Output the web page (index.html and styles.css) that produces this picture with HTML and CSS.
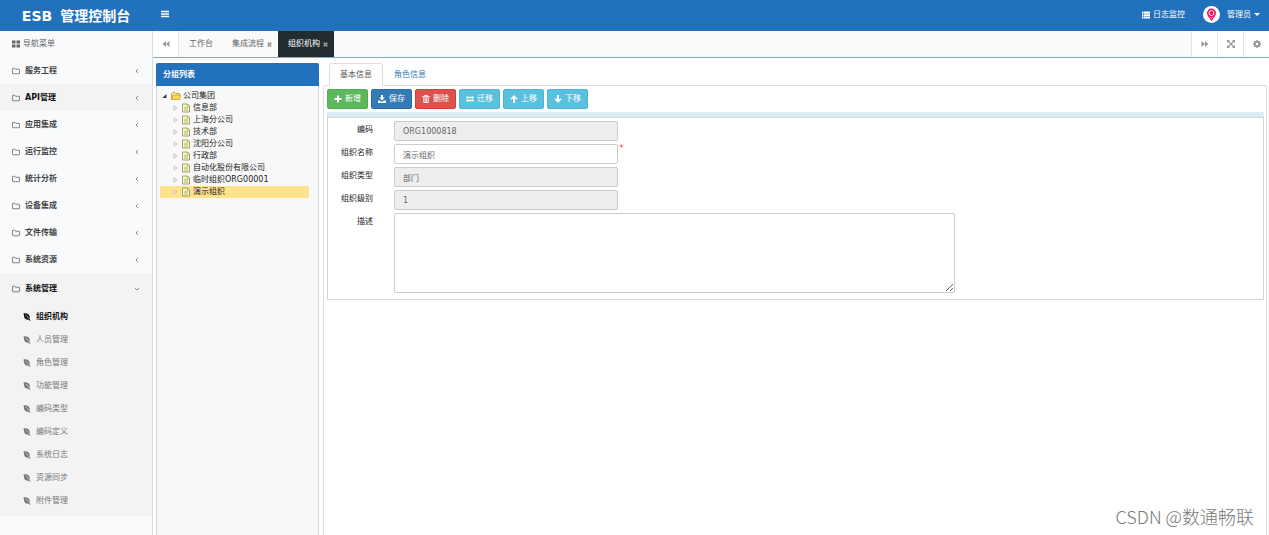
FILE: index.html
```html
<!DOCTYPE html>
<html lang="zh-CN">
<head>
<meta charset="utf-8">
<title>ESB 管理控制台</title>
<link rel="stylesheet" href="styles.css">
</head>
<body>
<svg class="sprite" aria-hidden="true">
  <symbol id="folder" viewBox="0 0 16 14"><path d="M1 2.500Q1 1.500 2 1.500H5.500L7 3.500H14Q15 3.500 15 4.500V11.500Q15 12.500 14 12.500H2Q1 12.500 1 11.500Z" fill="none" stroke="currentColor" stroke-width="1.600"/></symbol>
  <symbol id="left" viewBox="0 0 8 12"><path d="M6 2L2 6L6 10" fill="none" stroke="currentColor" stroke-width="1.700"/></symbol>
  <symbol id="down" viewBox="0 0 12 8"><path d="M2 2L6 6L10 2" fill="none" stroke="currentColor" stroke-width="1.700"/></symbol>
  <symbol id="leaf" viewBox="0 0 16 16"><path d="M1 1C7 0 12 2 13 6C14 9 13 11 13 12L15 15L14 16L11.500 13.500C6 14 2 11 2 6C2 4 1 3 1 1Z" fill="currentColor"/><path d="M5 4C8 5 10 8 11 11" fill="none" stroke="#f3f3f3" stroke-width="1.300"/></symbol>
  <symbol id="grid" viewBox="0 0 16 14"><path d="M0 0H7V6H0ZM9 0H16V6H9ZM0 8H7V14H0ZM9 8H16V14H9Z" fill="currentColor"/></symbol>
  <symbol id="bars" viewBox="0 0 14 12"><path d="M0 1.500H14M0 6H14M0 10.500H14" stroke="currentColor" stroke-width="2.600"/></symbol>
  <symbol id="list" viewBox="0 0 16 14"><path d="M0 0H3V3H0ZM4 0H16V3H4ZM0 3.600H3V6.600H0ZM4 3.600H16V6.600H4ZM0 7.200H3V10.200H0ZM4 7.200H16V10.200H4ZM0 10.800H3V13.800H0ZM4 10.800H16V13.800H4Z" fill="currentColor"/></symbol>
  <symbol id="back" viewBox="0 0 16 12"><path d="M8 0V12L1 6ZM15 0V12L8 6Z" fill="currentColor"/></symbol>
  <symbol id="forward" viewBox="0 0 16 12"><path d="M1 0V12L8 6ZM8 0V12L15 6Z" fill="currentColor"/></symbol>
  <symbol id="expand" viewBox="0 0 16 16"><path d="M0 0H6L0 6ZM10 0H16V6ZM0 10V16H6ZM16 10V16H10Z" fill="currentColor"/><path d="M2 2L14 14M14 2L2 14" stroke="currentColor" stroke-width="2.400"/></symbol>
  <symbol id="gear" viewBox="0 0 16 16"><circle cx="8" cy="8" r="4.500" fill="none" stroke="currentColor" stroke-width="4"/><path d="M8 0V3M8 13V16M0 8H3M13 8H16M2.300 2.300L4 4M12 12L13.700 13.700M13.700 2.300L12 4M4 12L2.300 13.700" stroke="currentColor" stroke-width="2.800"/></symbol>
  <symbol id="close" viewBox="0 0 12 12"><path d="M1.500 1.500L10.500 10.500M10.500 1.500L1.500 10.500" stroke="currentColor" stroke-width="3.400"/></symbol>
  <symbol id="plus" viewBox="0 0 16 16"><path d="M8 1V15M1 8H15" stroke="currentColor" stroke-width="4"/></symbol>
  <symbol id="save" viewBox="0 0 16 16"><path d="M6 0H10V5H13.500L8 11L2.500 5H6ZM0 11H4L6 13H10L12 11H16V16H0Z" fill="currentColor"/></symbol>
  <symbol id="trash" viewBox="0 0 16 16"><path d="M5 2.500V1H11V2.500M0.500 3.500H15.500" fill="none" stroke="currentColor" stroke-width="2"/><path d="M3.500 5V15H12.500V5M6.500 5V15M9.500 5V15" fill="none" stroke="currentColor" stroke-width="1.800"/></symbol>
  <symbol id="swap" viewBox="0 0 16 14"><path d="M0 2.500H12V0L16 4L12 8V5.500H0ZM16 8.500H4V6L0 10L4 14V11.500H16Z" fill="currentColor"/></symbol>
  <symbol id="up" viewBox="0 0 16 16"><path d="M8 0L15 7.500L13 9.500L10 7V16H6V7L3 9.500L1 7.500Z" fill="currentColor"/></symbol>
  <symbol id="downarrow" viewBox="0 0 16 16"><path d="M8 16L15 8.500L13 6.500L10 9V0H6V9L3 6.500L1 8.500Z" fill="currentColor"/></symbol>
  <symbol id="page" viewBox="0 0 16 18"><path d="M1 1H11L15 5V17H1Z" fill="#fafad2" stroke="#8c8e3c" stroke-width="1.600"/><path d="M10.500 1V5.500H15M4 7.500H12M4 10.500H12M4 13.500H12" fill="none" stroke="#9b9d50" stroke-width="1.200"/></symbol>
  <symbol id="treefolder" viewBox="0 0 20 16"><path d="M1 14V3L3 1H8L10 3H17V6" fill="#fff09a" stroke="#b78a1c" stroke-width="1.400"/><path d="M1 15L4 6H19L17 15Z" fill="#ffdc55" stroke="#b78a1c" stroke-width="1.400"/></symbol>
  <symbol id="closed" viewBox="0 0 10 12"><path d="M2 2L8 6L2 10Z" fill="#fff" stroke="#a6a6a6" stroke-width="1.300"/></symbol>
  <symbol id="open" viewBox="0 0 10 10"><path d="M9 1V9H1Z" fill="#333"/></symbol>
</svg>

<header class="topbar">
  <h1 class="brand"><span>ESB</span> <span>管理控制台</span></h1>
  <button class="plain toggle" aria-label="切换菜单"><svg class="icon"><use href="#bars"/></svg></button>
  <div class="account">
    <a class="log" href="#"><svg class="icon"><use href="#list"/></svg>日志监控</a>
    <button class="plain user">
      <svg class="avatar" viewBox="0 0 34 34"><circle cx="17" cy="17" r="17" fill="#fff"/><path d="M17 30C13 24 8 20 8 14A9 9 0 0 1 26 14C26 20 21 24 17 30Z" fill="#e8195f"/><circle cx="17" cy="14" r="5" fill="#e8195f" stroke="#fff" stroke-width="1.800"/><path d="M14 22L17 25L20 22" fill="none" stroke="#fff" stroke-width="1.200"/></svg>
      管理员<span class="caret"></span>
    </button>
  </div>
</header>

<div class="shell">
  <nav class="sidebar">
    <h2 class="nav-title"><svg class="icon"><use href="#grid"/></svg>导航菜单</h2>
    <button class="group"><svg class="icon"><use href="#folder"/></svg>服务工程<svg class="arrow"><use href="#left"/></svg></button>
    <button class="group hover"><svg class="icon"><use href="#folder"/></svg>API管理<svg class="arrow"><use href="#left"/></svg></button>
    <button class="group"><svg class="icon"><use href="#folder"/></svg>应用集成<svg class="arrow"><use href="#left"/></svg></button>
    <button class="group"><svg class="icon"><use href="#folder"/></svg>运行监控<svg class="arrow"><use href="#left"/></svg></button>
    <button class="group"><svg class="icon"><use href="#folder"/></svg>统计分析<svg class="arrow"><use href="#left"/></svg></button>
    <button class="group"><svg class="icon"><use href="#folder"/></svg>设备集成<svg class="arrow"><use href="#left"/></svg></button>
    <button class="group"><svg class="icon"><use href="#folder"/></svg>文件传输<svg class="arrow"><use href="#left"/></svg></button>
    <button class="group"><svg class="icon"><use href="#folder"/></svg>系统资源<svg class="arrow"><use href="#left"/></svg></button>
    <div class="expanded">
      <button class="group current"><svg class="icon"><use href="#folder"/></svg>系统管理<svg class="arrow"><use href="#down"/></svg></button>
      <a class="sub current" href="#"><svg class="icon"><use href="#leaf"/></svg>组织机构</a>
      <a class="sub" href="#"><svg class="icon"><use href="#leaf"/></svg>人员管理</a>
      <a class="sub" href="#"><svg class="icon"><use href="#leaf"/></svg>角色管理</a>
      <a class="sub" href="#"><svg class="icon"><use href="#leaf"/></svg>功能管理</a>
      <a class="sub" href="#"><svg class="icon"><use href="#leaf"/></svg>编码类型</a>
      <a class="sub" href="#"><svg class="icon"><use href="#leaf"/></svg>编码定义</a>
      <a class="sub" href="#"><svg class="icon"><use href="#leaf"/></svg>系统日志</a>
      <a class="sub" href="#"><svg class="icon"><use href="#leaf"/></svg>资源同步</a>
      <a class="sub" href="#"><svg class="icon"><use href="#leaf"/></svg>附件管理</a>
    </div>
  </nav>

  <div class="workspace">
    <div class="pagetabs">
      <button class="plain tool first" aria-label="向左滚动"><svg class="icon"><use href="#back"/></svg></button>
      <a class="pagetab" href="#">工作台</a>
      <a class="pagetab closable" href="#">集成流程<svg class="x"><use href="#close"/></svg></a>
      <a class="pagetab closable active" href="#">组织机构<svg class="x"><use href="#close"/></svg></a>
      <div class="tools">
        <button class="plain tool" aria-label="向右滚动"><svg class="icon"><use href="#forward"/></svg></button>
        <button class="plain tool" aria-label="全屏"><svg class="icon"><use href="#expand"/></svg></button>
        <button class="plain tool" aria-label="设置"><svg class="icon"><use href="#gear"/></svg></button>
      </div>
    </div>

    <div class="content">
      <section class="treepanel">
        <h2 class="treetitle">分组列表</h2>
        <div class="tree">
          <a class="node root" href="#"><svg class="twist"><use href="#open"/></svg><svg class="foldericon"><use href="#treefolder"/></svg>公司集团</a>
          <a class="node" href="#"><svg class="twist"><use href="#closed"/></svg><svg class="doc"><use href="#page"/></svg>信息部</a>
          <a class="node" href="#"><svg class="twist"><use href="#closed"/></svg><svg class="doc"><use href="#page"/></svg>上海分公司</a>
          <a class="node" href="#"><svg class="twist"><use href="#closed"/></svg><svg class="doc"><use href="#page"/></svg>技术部</a>
          <a class="node" href="#"><svg class="twist"><use href="#closed"/></svg><svg class="doc"><use href="#page"/></svg>沈阳分公司</a>
          <a class="node" href="#"><svg class="twist"><use href="#closed"/></svg><svg class="doc"><use href="#page"/></svg>行政部</a>
          <a class="node" href="#"><svg class="twist"><use href="#closed"/></svg><svg class="doc"><use href="#page"/></svg>自动化股份有限公司</a>
          <a class="node" href="#"><svg class="twist"><use href="#closed"/></svg><svg class="doc"><use href="#page"/></svg>临时组织ORG00001</a>
          <a class="node selected" href="#"><svg class="twist"><use href="#closed"/></svg><svg class="doc"><use href="#page"/></svg>演示组织</a>
        </div>
      </section>

      <main class="detail">
        <div class="tabs">
          <a class="tab active" href="#">基本信息</a>
          <a class="tab" href="#">角色信息</a>
        </div>
        <div class="pane">
          <div class="toolbar">
            <button class="btn green"><svg class="icon"><use href="#plus"/></svg>新增</button>
            <button class="btn blue"><svg class="icon"><use href="#save"/></svg>保存</button>
            <button class="btn red"><svg class="icon"><use href="#trash"/></svg>删除</button>
            <button class="btn cyan"><svg class="icon"><use href="#swap"/></svg>迁移</button>
            <button class="btn cyan"><svg class="icon"><use href="#up"/></svg>上移</button>
            <button class="btn cyan"><svg class="icon"><use href="#downarrow"/></svg>下移</button>
          </div>
          <form class="form">
            <div class="row"><label for="code">编码</label><input id="code" value="ORG1000818" readonly></div>
            <div class="row"><label for="name">组织名称</label><input id="name" value="演示组织"><span class="required">*</span></div>
            <div class="row"><label for="type">组织类型</label><input id="type" value="部门" readonly></div>
            <div class="row"><label for="level">组织级别</label><input id="level" value="1" readonly></div>
            <div class="row"><label for="desc">描述</label><textarea id="desc"></textarea></div>
          </form>
        </div>
      </main>
    </div>
  </div>
</div>
<div class="watermark">CSDN @数通畅联</div>
</body>
</html>
```
FILE: styles.css
```css
* { box-sizing: border-box; }

body {
  margin: 0;
  height: 100vh;
  display: flex;
  flex-direction: column;
  overflow: hidden;
  background: #fff;
  color: #333;
  font: 8px/12px "DejaVu Sans", "Noto Sans CJK SC", sans-serif;
}

button, input, textarea { font: inherit; color: inherit; }
button { cursor: pointer; }
a { color: inherit; text-decoration: none; }
h1, h2 { margin: 0; font-size: inherit; }
svg { display: block; flex: none; }
.sprite { position: absolute; width: 0; height: 0; }
.icon { width: 8px; height: 8px; }
.plain { border: 0; padding: 0; background: none; }

/* Top bar */
.topbar {
  display: flex;
  align-items: center;
  flex: none;
  height: 31px;
  background: #2271bd;
  color: #fff;
}
.brand {
  display: flex;
  justify-content: center;
  gap: 8px;
  width: 152px;
  font-size: 14px;
  line-height: 20px;
  white-space: nowrap;
}
.toggle { margin: 0 0 4px 9px; }
.account {
  display: flex;
  align-items: center;
  gap: 18px;
  margin: 0 9px 2px auto;
}
.log, .user { display: flex; align-items: center; gap: 3px; }
.avatar { width: 17px; height: 17px; margin-right: 4px; }
.caret {
  border: 3px solid transparent;
  border-top-color: #fff;
  border-bottom: 0;
}

/* Navigation */
.shell { display: flex; flex: 1; min-height: 0; }
.sidebar {
  display: flex;
  flex-direction: column;
  flex: none;
  width: 153px;
  border-right: 1px solid #d8dde0;
  background: #f9fafc;
}
.nav-title {
  display: flex;
  align-items: center;
  gap: 3px;
  height: 26px;
  padding-left: 12px;
  color: #666;
  font-weight: 400;
}
.group {
  display: flex;
  align-items: center;
  gap: 5px;
  width: 100%;
  height: 27px;
  padding: 0 12px;
  border: 0;
  background: none;
  color: #444;
  font-weight: 700;
}
.group.hover { background: #f3f3f3; color: #111; }
.group.current { color: #111; }
.group .icon { color: #666; }
.arrow { width: 6px; height: 6px; margin-left: auto; color: #777; }
.expanded { padding: 2px 0 4px; background: #f3f3f3; }
.expanded .group { margin-bottom: 3px; }
.sub {
  display: flex;
  align-items: center;
  gap: 5px;
  height: 23px;
  padding-left: 23px;
  color: #777;
}
.sub.current { color: #111; font-weight: 700; }

/* Open pages */
.workspace { display: flex; flex: 1; flex-direction: column; min-width: 0; }
.pagetabs {
  display: flex;
  flex: none;
  height: 27px;
  border-bottom: 1px solid #7fabd0;
  background: #fafafa;
  color: #666;
}
.tool {
  display: flex;
  align-items: center;
  justify-content: center;
  width: 26px;
  border-left: 1px solid #e4e4e4;
  background: #fff;
  color: #999;
}
.tool.first { border-left: 0; border-right: 1px solid #e4e4e4; }
.tools { display: flex; margin-left: auto; }
.pagetab {
  display: flex;
  align-items: center;
  gap: 3px;
  padding: 0 9px 0 10px;
}
.pagetab.closable { padding-right: 6px; }
.pagetab.active { background: #222d32; color: #fff; }
.x { width: 5px; height: 5px; color: #999; }

.content {
  display: flex;
  flex: 1;
  gap: 4px;
  min-height: 0;
  padding: 5px 2px 0 3px;
}

/* Organisation tree */
.treepanel {
  flex: none;
  width: 163px;
  border: 1px solid #d4d7da;
  border-width: 0 1px;
  background: #f8f8f8;
}
.treetitle {
  margin: 0 -1px;
  padding: 6px 7px 5px;
  border-radius: 2px 2px 0 0;
  background: #2271bd;
  color: #fff;
}
.tree { padding: 4px 9px 0 3px; color: #222; }
.node {
  display: flex;
  align-items: center;
  height: 12px;
  padding-left: 13px;
  white-space: nowrap;
}
.node.root { padding-left: 2px; }
.node.selected { background: #ffe38c; }
.twist { width: 5px; height: 6px; margin-right: 4px; }
.doc { width: 8px; height: 10px; margin-right: 3px; }
.foldericon { width: 10px; height: 8px; margin-right: 2px; }

/* Detail */
.detail { display: flex; flex: 1; flex-direction: column; min-width: 0; }
.tabs { display: flex; padding-left: 6px; }
.tab {
  padding: 5px 10px 4px;
  border: 1px solid transparent;
  border-bottom: 0;
  color: #337ab7;
}
.tab.active {
  z-index: 1;
  margin-bottom: -1px;
  padding: 5px 10px;
  border-color: #ddd;
  border-radius: 3px 3px 0 0;
  background: #fff;
  color: #555;
}
.pane {
  flex: 1;
  padding: 3px 2px 0 3px;
  border: 1px solid #ddd;
  border-bottom: 0;
  border-radius: 3px 3px 0 0;
}
.toolbar {
  display: flex;
  gap: 3px;
  padding-bottom: 3px;
  border-bottom: 5px solid #d9edf7;
}
.btn {
  display: flex;
  align-items: center;
  justify-content: center;
  gap: 3px;
  height: 20px;
  padding: 0 6px;
  border: 1px solid;
  border-radius: 2px;
  color: #fff;
}
.green { background: #5cb85c; border-color: #4cae4c; }
.blue { background: #337ab7; border-color: #2e6da4; }
.red { background: #d9534f; border-color: #d43f3a; }
.cyan { background: #5bc0de; border-color: #46b8da; }
.form {
  display: flex;
  flex-direction: column;
  gap: 3px;
  padding: 3px 0 6px;
  border: 1px solid #d4d4d4;
}
.row { display: flex; align-items: flex-start; }
.row label { width: 45px; margin-right: 21px; padding-top: 3px; text-align: right; color: #222; }
.row input, .row textarea {
  margin: 0;
  padding: 0 8px;
  border: 1px solid #ccc;
  border-radius: 2px;
  background: #fff;
  color: #666;
  outline: 0;
}
.row input { width: 24%; height: 20px; }
.row input:read-only { background: #eee; }
.row textarea { width: 60%; height: 80px; }
.required { margin-left: 1px; color: #f33; line-height: 10px; }

.watermark {
  position: absolute;
  right: 15px;
  bottom: 6px;
  color: #777;
  font: 300 18px/26px "Noto Sans CJK SC", sans-serif;
}
```
